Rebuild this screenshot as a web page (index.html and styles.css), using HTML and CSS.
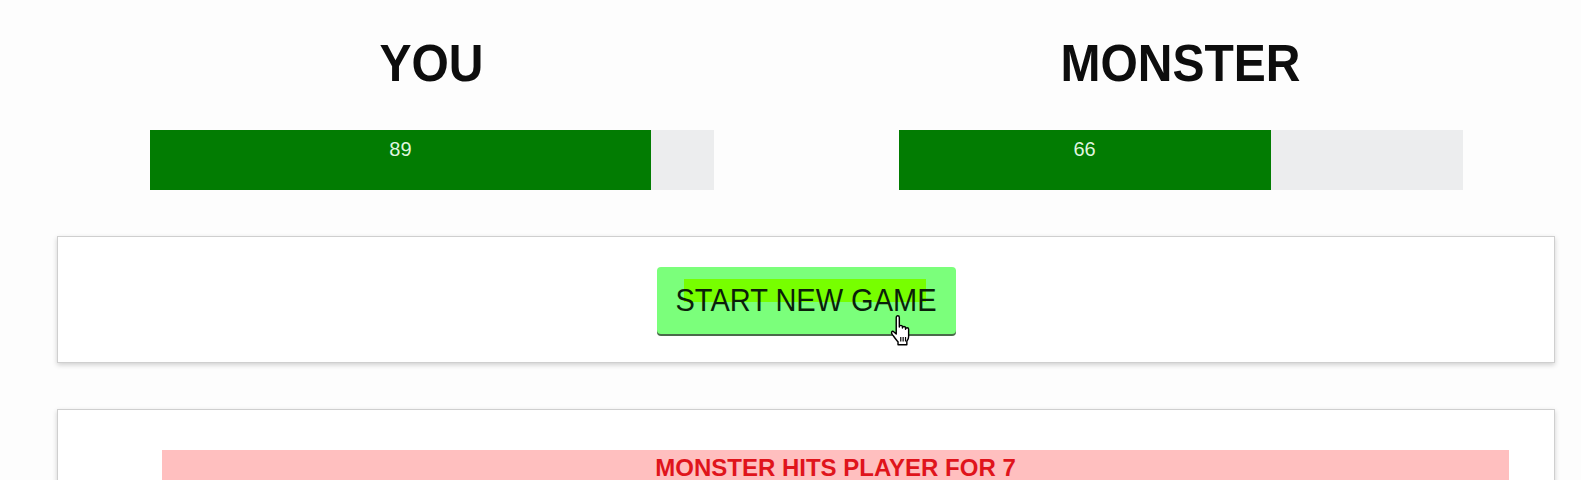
FILE: index.html
```html
<!DOCTYPE html>
<html lang="en">
<head>
<meta charset="utf-8">
<title>Monster Slayer</title>
<link rel="stylesheet" href="styles.css">
</head>
<body>
<div class="app">
  <section class="players">
    <div class="player">
      <h1 class="player-name">YOU</h1>
      <div class="healthbar">
        <div class="health" style="width: 89%;">89</div>
      </div>
    </div>
    <div class="player">
      <h1 class="player-name">MONSTER</h1>
      <div class="healthbar">
        <div class="health" style="width: 66%;">66</div>
      </div>
    </div>
  </section>

  <section class="panel controls">
    <button class="start-btn" type="button"><span class="label">START NEW GAME</span>
      <svg class="cursor" width="24" height="31" viewBox="0 0 20 26" aria-hidden="true">
        <path d="M6 2a1.3 1.3 0 0 1 2.6 0V10a1.3 1.3 0 0 1 2.6 0V11a1.3 1.3 0 0 1 2.6 0V12a1.3 1.3 0 0 1 2.6 0V18c0 2-1 3-1.5 4V25H7.5V22.5C6 21 4 18 2.5 16C1.5 14.7 2.3 13.3 3.6 13.8L6 16Z" fill="#fff" stroke="#000" stroke-width="1.2" stroke-linejoin="round"/>
        <path d="M9.8 18.5v3.8M11.8 18.5v3.8M13.8 18.5v3.8" stroke="#000" stroke-width="1"/>
      </svg>
    </button>
  </section>

  <section class="panel log">
    <ul class="log-list">
      <li class="log-entry monster-turn">MONSTER HITS PLAYER FOR 7</li>
    </ul>
  </section>
</div>
</body>
</html>
```

FILE: styles.css
```css
html, body {
  margin: 0;
  padding: 0;
  background: #fdfdfd;
  font-family: "Liberation Sans", Arial, Helvetica, sans-serif;
  color: #111;
}

.app {
  width: 1498px;
  margin-left: 57px;
  padding-top: 40px;
}

.players {
  display: grid;
  grid-template-columns: 1fr 1fr;
}

.player {
  display: flex;
  flex-direction: column;
  align-items: center;
}

.player-name {
  margin: 0;
  font-size: 48px;
  line-height: 48px;
  font-weight: bold;
  color: #0d0d0d;
  transform: scaleY(1.08);
}

.healthbar {
  margin-top: 42px;
  width: 564px;
  height: 60px;
  background: #ecedee;
}

.health {
  height: 100%;
  background: #027c02;
  color: #dff5df;
  text-align: center;
  font-size: 20px;
  line-height: 38px;
}

.panel {
  background: #fff;
  border: 1px solid #cfcfcf;
  box-shadow: 0 2px 5px rgba(0, 0, 0, 0.18);
}

.controls {
  margin-top: 46px;
  padding: 30px 0 28px;
  display: flex;
  justify-content: center;
}

.start-btn {
  position: relative;
  width: 299px;
  height: 67px;
  padding: 0;
  border: 0;
  border-radius: 4px;
  background: #7bff7b;
  box-shadow: 0 2px 0 #4a6a4a;
  font-family: "Liberation Sans", Arial, Helvetica, sans-serif;
  font-size: 29px;
  color: #0a1f0a;
  cursor: pointer;
  isolation: isolate;
}

.start-btn::before {
  content: "";
  position: absolute;
  left: 27px;
  top: 12px;
  width: 242px;
  height: 23px;
  background: #77ff00;
  z-index: -1;
}

.label {
  display: inline-block;
  transform: scaleY(1.08);
}

.cursor {
  position: absolute;
  left: 232px;
  top: 48px;
}

.log {
  margin-top: 46px;
  padding: 40px 45px 20px;
}

.log-list {
  list-style: none;
  margin: 0;
  padding-left: 59px;
}

.log-entry {
  padding: 3px 0;
  text-align: center;
  font-size: 24px;
  line-height: 30px;
  font-weight: bold;
}

.monster-turn {
  background: #ffbfbf;
  color: #e0141b;
}
```
